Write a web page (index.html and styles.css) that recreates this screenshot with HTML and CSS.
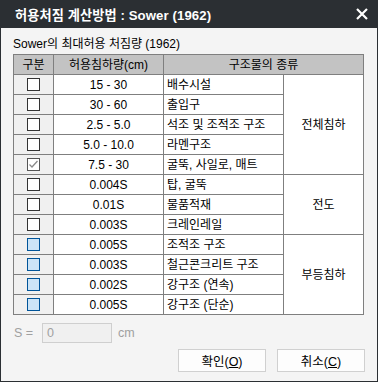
FILE: index.html
```html
<!DOCTYPE html>
<html lang="ko">
<head>
<meta charset="utf-8">
<link rel="stylesheet" href="styles.css">
</head>
<body>
<div class="window">
  <div class="titlebar">
    <span class="title">허용처짐 계산방법 : Sower (1962)</span>
    <svg class="close" width="12" height="12" viewBox="0 0 12 12"><path d="M1 1L11 11M11 1L1 11" stroke="#fff" stroke-width="2.2"/></svg>
  </div>
  <div class="content">
    <div class="subtitle">Sower의 최대허용 처짐량 (1962)</div>
    <table class="grid">
      <colgroup><col class="c1"><col class="c2"><col class="c3"><col class="c4"></colgroup>
      <thead>
        <tr><th>구분</th><th>허용침하량(cm)</th><th colspan="2">구조물의 종류</th></tr>
      </thead>
      <tbody>
        <tr><td class="chk"><span class="box"></span></td><td class="val">15 - 30</td><td class="name">배수시설</td><td class="grp" rowspan="5">전체침하</td></tr>
        <tr><td class="chk"><span class="box"></span></td><td class="val">30 - 60</td><td class="name">출입구</td></tr>
        <tr><td class="chk"><span class="box"></span></td><td class="val">2.5 - 5.0</td><td class="name">석조 및 조적조 구조</td></tr>
        <tr><td class="chk"><span class="box"></span></td><td class="val">5.0 - 10.0</td><td class="name">라멘구조</td></tr>
        <tr><td class="chk"><span class="box checked"><svg width="11" height="11" viewBox="0 0 11 11"><path d="M1.5 5.5L4 8L9.5 2" fill="none" stroke="#8a8a8a" stroke-width="1.3"/></svg></span></td><td class="val">7.5 - 30</td><td class="name">굴뚝, 사일로, 매트</td></tr>
        <tr><td class="chk"><span class="box"></span></td><td class="val">0.004S</td><td class="name">탑, 굴뚝</td><td class="grp" rowspan="3">전도</td></tr>
        <tr><td class="chk"><span class="box"></span></td><td class="val">0.01S</td><td class="name">물품적재</td></tr>
        <tr><td class="chk"><span class="box"></span></td><td class="val">0.003S</td><td class="name">크레인레일</td></tr>
        <tr><td class="chk"><span class="box blue"></span></td><td class="val">0.005S</td><td class="name">조적조 구조</td><td class="grp" rowspan="4">부등침하</td></tr>
        <tr><td class="chk"><span class="box blue"></span></td><td class="val">0.003S</td><td class="name">철근콘크리트 구조</td></tr>
        <tr><td class="chk"><span class="box blue"></span></td><td class="val">0.002S</td><td class="name">강구조 (연속)</td></tr>
        <tr><td class="chk"><span class="box blue"></span></td><td class="val">0.005S</td><td class="name">강구조 (단순)</td></tr>
      </tbody>
    </table>
    <div class="srow">
      <span class="slabel">S =</span>
      <span class="sinput">0</span>
      <span class="sunit">cm</span>
    </div>
    <div class="buttons">
      <button class="btn">확인(<u>O</u>)</button>
      <button class="btn">취소(<u>C</u>)</button>
    </div>
  </div>
</div>
</body>
</html>
```

FILE: styles.css
```css
html, body {
  margin: 0;
  padding: 0;
  background: #f4f4f4;
}
body {
  font-family: "Liberation Sans", "Noto Sans CJK KR", sans-serif;
  font-size: 12px;
  color: #000;
}
.window {
  width: 378px;
  height: 382px;
  box-sizing: border-box;
  border: 1px solid #2b2f33;
  border-top: none;
  background: #f4f4f4;
  display: flex;
  flex-direction: column;
}
.titlebar {
  height: 28px;
  margin: 0 -1px;
  background: #2b2f33;
  display: flex;
  align-items: center;
  justify-content: space-between;
  padding: 0 10px 0 15px;
  box-sizing: border-box;
  flex: none;
}
.title {
  color: #fff;
  font-weight: bold;
  font-size: 13.2px;
  font-family: "Liberation Sans", "Noto Sans CJK KR", sans-serif;
  letter-spacing: 0.1px;
}
.close {
  display: block;
}
.content {
  padding: 8px 13px 0 12px;
  display: flex;
  flex-direction: column;
}
.subtitle {
  height: 18px;
  line-height: 16px;
  font-size: 12px;
}
.grid {
  border-collapse: collapse;
  width: 351px;
  table-layout: fixed;
  border: 1px solid #6e6e6e;
}
.c1 { width: 40px; }
.c2 { width: 110px; }
.c3 { width: 120px; }
.c4 { width: 80px; }
.grid tr {
  height: 20px;
}
.grid th, .grid td {
  border: 1px solid #7f7f7f;
  height: 20px;
  line-height: 18px;
  padding: 0;
  box-sizing: border-box;
  font-weight: normal;
  white-space: nowrap;
  overflow: hidden;
  font-size: 12px;
}
.grid th {
  background: #c3c3c3;
  text-align: center;
}
.grid td {
  background: #fff;
}
.grid td.chk {
  background: #f0f0f0;
  text-align: center;
}
.box {
  display: inline-flex;
  align-items: center;
  justify-content: center;
  width: 13px;
  height: 13px;
  box-sizing: border-box;
  border: 1px solid #333;
  background: #fff;
  vertical-align: middle;
  margin-top: -2px;
}
.box.checked {
  border-color: #555;
}
.box.blue {
  background: #cce4f7;
  border-color: #005499;
}
.val {
  text-align: center;
}
.name {
  padding-left: 3px !important;
}
.grp {
  text-align: center;
}
.srow {
  display: flex;
  align-items: center;
  height: 20px;
  margin-top: 8px;
  color: #a0a0a0;
  font-size: 12.5px;
}
.slabel {
  width: 28px;
  padding-left: 1px;
}
.sinput {
  width: 70px;
  height: 20px;
  box-sizing: border-box;
  border: 1px solid #cfcfcf;
  background: #f0f0f0;
  padding: 1px 0 0 4px;
  line-height: 16px;
  color: #a0a0a0;
}
.sunit {
  margin-left: 6px;
}
.buttons {
  display: flex;
  justify-content: flex-end;
  gap: 11px;
  margin-top: 6px;
  margin-right: -1px;
}
.btn {
  width: 88px;
  height: 23px;
  box-sizing: border-box;
  border: 1px solid #d0d0d0;
  background: #fdfdfd;
  font-family: "Liberation Sans", "Noto Sans CJK KR", sans-serif;
  font-size: 12.5px;
  padding: 0;
  color: #000;
}
```
